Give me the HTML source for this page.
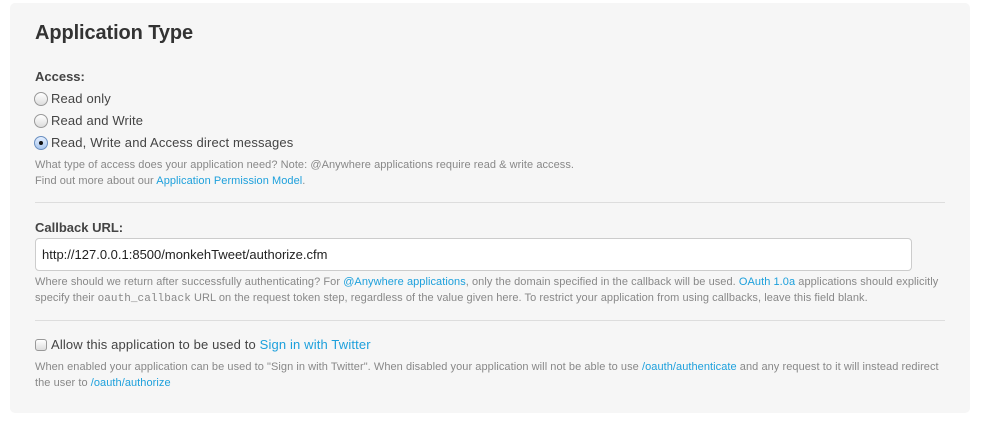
<!DOCTYPE html>
<html><head><style>
body{margin:0;background:#fff;font-family:"Liberation Sans",sans-serif;}
.panel{position:absolute;left:10px;top:3px;width:960px;height:410px;background:#f6f6f6;border-radius:5px;}
.a{position:absolute;white-space:nowrap;}
h1{position:absolute;left:35px;top:22px;margin:0;font-size:20px;font-weight:bold;color:#333;letter-spacing:-0.1px;}
.lbl{font-size:13px;font-weight:bold;color:#444;}
.opt{font-size:13px;color:#444;letter-spacing:0.15px;}
.help{font-size:11px;color:#888;line-height:16px;letter-spacing:0.06px;}
a{color:#1da0dc;text-decoration:none;}
.radio{position:absolute;width:12px;height:12px;border:1px solid #999;border-radius:50%;background:linear-gradient(#fff,#ddd);}
.hr{position:absolute;left:35px;width:910px;height:1px;background:#ddd;}
.input{position:absolute;left:35px;top:238px;width:875px;height:31px;border:1px solid #ccc;border-radius:4px;background:#fff;}
code{font-family:"Liberation Mono",monospace;font-size:11px;}
</style></head><body>
<div class="panel"></div>
<h1>Application Type</h1>
<div class="a lbl" style="left:35px;top:69px">Access:</div>
<div class="radio" style="left:34px;top:92px"></div>
<div class="a opt" style="left:51px;top:91px">Read only</div>
<div class="radio" style="left:34px;top:114px"></div>
<div class="a opt" style="left:51px;top:113px">Read and Write</div>
<div class="radio" style="left:34px;top:136px;border-color:#6a8fc0;background:linear-gradient(#e4efff,#a9c6ee)"><div style="position:absolute;left:4px;top:4px;width:4px;height:4px;border-radius:50%;background:#111"></div></div>
<div class="a opt" style="left:51px;top:135px">Read, Write and Access direct messages</div>
<div class="a help" style="left:35px;top:157px">What type of access does your application need? Note: @Anywhere applications require read &amp; write access.<br>Find out more about our <a>Application Permission Model</a>.</div>
<div class="hr" style="top:202px"></div>
<div class="a lbl" style="left:35px;top:220px">Callback URL:</div>
<div class="input"></div>
<div class="a" style="left:42px;top:247px;font-size:13px;color:#222">http://127.0.0.1:8500/monkehTweet/authorize.cfm</div>
<div class="a help" style="left:35px;top:274px">Where should we return after successfully authenticating? For <a>@Anywhere applications</a>, only the domain specified in the callback will be used. <a>OAuth 1.0a</a> applications should explicitly<br>specify their <code>oauth_callback</code> URL on the request token step, regardless of the value given here. To restrict your application from using callbacks, leave this field blank.</div>
<div class="hr" style="top:320px"></div>
<div class="a" style="left:35px;top:339px;width:10px;height:10px;border:1px solid #999;border-radius:3px;background:linear-gradient(#fff,#ddd)"></div>
<div class="a opt" style="left:51px;top:337px">Allow this application to be used to <a>Sign in with Twitter</a></div>
<div class="a help" style="left:35px;top:359px">When enabled your application can be used to "Sign in with Twitter". When disabled your application will not be able to use <a>/oauth/authenticate</a> and any request to it will instead redirect<br>the user to <a>/oauth/authorize</a></div>
</body></html>
